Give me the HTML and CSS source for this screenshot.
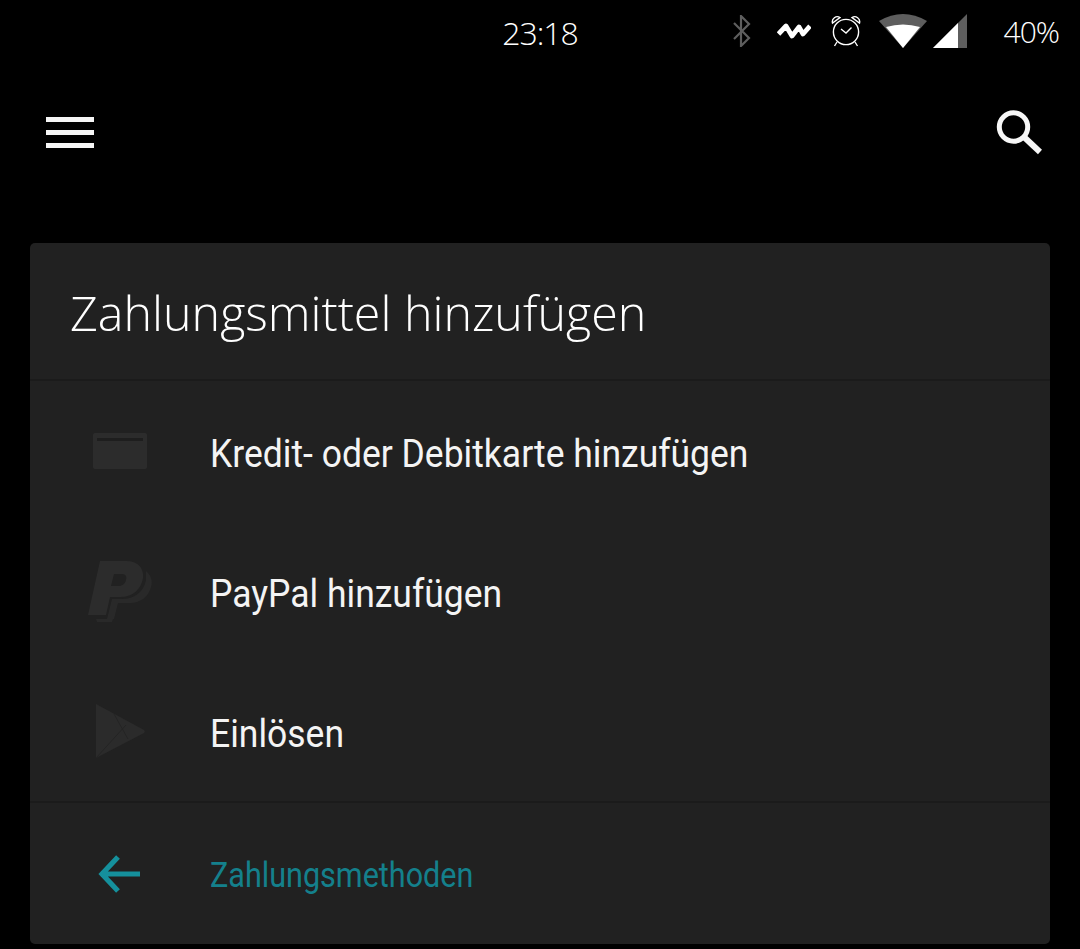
FILE: index.html
```html
<!DOCTYPE html>
<html lang="de">
<head>
<meta charset="utf-8">
<title>Zahlungsmittel hinzufügen</title>
<link rel="stylesheet" href="styles.css">
</head>
<body>
<header class="status">
  <span class="time">23:18</span>
  <div class="status-right">
    <svg class="ic-bt" width="18" height="32" viewBox="0 0 18 32"><path d="M1 8 L16 23 L8 31 V1 L16 9 L1 24" fill="none" stroke="#5e5e5e" stroke-width="2.2"/></svg>
    <svg class="ic-pulse" width="34" height="16" viewBox="0 0 34 16"><path d="M1.5 11 L9 3 L15 13 L22 4 L26 11 L33 3" fill="none" stroke="#fff" stroke-width="4.8" stroke-linejoin="round"/></svg>
    <svg class="ic-alarm" width="30" height="32" viewBox="0 0 30 32"><circle cx="15" cy="17" r="12.6" fill="none" stroke="#fff" stroke-width="1.4"/><path d="M1.5 8 A5 5 0 0 1 9 2.5 Z M28.5 8 A5 5 0 0 0 21 2.5 Z M10 14 L15 18 L20.5 12.5 M6 27 L3.5 31 M24 27 L26.5 31" fill="none" stroke="#fff" stroke-width="1.4"/></svg>
    <svg class="ic-wifi" width="48" height="34" viewBox="0 0 48 34"><path d="M0 7 Q24 -7 48 7 L24 34 Z" fill="#5e5e5e"/><path d="M7 13 Q24 8 41 13 L24 34 Z" fill="#fff"/></svg>
    <svg class="ic-signal" width="34" height="34" viewBox="0 0 34 34"><path d="M0 34 L34 0 V34 Z" fill="#5e5e5e"/><path d="M0 34 L25 9 V34 Z" fill="#fff"/></svg>
    <span class="batt">40%</span>
  </div>
</header>

<nav class="toolbar">
  <div class="menu"><span></span><span></span><span></span></div>
  <svg width="48" height="48" viewBox="0 0 48 48"><circle cx="19.5" cy="19" r="14.2" fill="none" stroke="#f6f6f6" stroke-width="5"/><path d="M30 29 L46 44" stroke="#f6f6f6" stroke-width="6" fill="none"/></svg>
</nav>

<main class="card">
  <h1 class="card-title">Zahlungsmittel hinzufügen</h1>
  <ul class="options">
    <li class="row">
      <svg class="row-icon" width="56" height="38" viewBox="0 0 56 38"><path d="M3 1 H53 A2 2 0 0 1 55 3 V35 A2 2 0 0 1 53 37 H3 A2 2 0 0 1 1 35 V3 A2 2 0 0 1 3 1 Z" fill="#2c2c2c"/><rect x="5" y="6" width="46" height="3" fill="#1e1e1e"/></svg>
      <span class="row-text">Kredit- oder Debitkarte hinzufügen</span>
    </li>
    <li class="row">
      <svg class="row-icon" width="64" height="64" viewBox="0 0 64 64"><path d="M58 12 C63 16 65 22 63 28 C61 37 53 44 42 44 H30 L26 60 H19 L24 40 H34 C46 40 56 33 58 21 Z M8 60 H25 L24 63 H9 Z" fill="#292929"/><path d="M12 2 H38 C50 2 56 9 55 19 C53 31 44 38 32 38 H22 L18 56 H0 Z M26 15 H34 C38 15 39 18 38 21 C37 25 34 27 30 27 H23 Z" fill="#2c2c2c" fill-rule="evenodd"/></svg>
      <span class="row-text">PayPal hinzufügen</span>
    </li>
    <li class="row">
      <svg class="row-icon" width="52" height="56" viewBox="0 0 52 56"><path d="M2 1 L50 27 A2 2 0 0 1 50 30 L2 55 Z" fill="#2b2b2b"/><path d="M2 55 L32 22 M20 11 L34 36" stroke="#242424" stroke-width="1" fill="none"/></svg>
      <span class="row-text">Einlösen</span>
    </li>
  </ul>
  <div class="footer">
    <svg class="row-icon" width="44" height="40" viewBox="0 0 44 40"><path d="M42 20 H5 M20 3 L4 20 L20 37" fill="none" stroke="#15909c" stroke-width="5.2"/></svg>
    <span class="footer-text">Zahlungsmethoden</span>
  </div>
</main>
</body>
</html>
```
FILE: styles.css
```css
* { box-sizing: border-box; }
html, body { margin: 0; height: 100%; }
body {
  background: #000;
  color: #fff;
  width: 1080px;
  height: 949px;
  overflow: hidden;
  font-family: Roboto, "Liberation Sans", sans-serif;
}
.status {
  height: 66px;
  display: flex;
  align-items: center;
  justify-content: center;
  position: relative;
}
.time {
  font: 300 32px "Open Sans", sans-serif;
  letter-spacing: -1px;
  margin-top: -2px;
}
.status-right {
  position: absolute;
  right: 21px;
  top: 13px;
  display: flex;
  align-items: center;
  height: 36px;
}
.ic-bt { margin-right: 26px; }
.ic-pulse { margin-right: 20px; }
.ic-alarm { margin-right: 18px; }
.ic-wifi { margin-right: 6px; }
.ic-signal { margin-right: 37px; }
.batt {
  font: 300 30px "Open Sans", sans-serif;
  letter-spacing: -1px;
}
.toolbar {
  height: 177px;
  padding: 42px 38px 0 46px;
  display: flex;
  justify-content: space-between;
  align-items: flex-start;
}
.menu {
  width: 48px;
  display: flex;
  flex-direction: column;
  gap: 8px;
  margin-top: 9px;
}
.menu span { height: 5px; background: #f6f6f6; }
.card {
  margin: 0 30px;
  height: 701px;
  background: #212121;
  border-radius: 5px;
  display: flex;
  flex-direction: column;
}
.card-title {
  margin: 0;
  height: 138px;
  padding: 1px 40px 0;
  display: flex;
  align-items: center;
  font: 300 48.4px "Open Sans", sans-serif;
  border-bottom: 2px solid #1b1b1b;
}
.options {
  list-style: none;
  margin: 0;
  padding: 0;
  height: 422px;
  border-bottom: 2px solid #1b1b1b;
}
.row, .footer {
  display: flex;
  align-items: center;
  height: 140px;
  position: relative;
}
.row-icon {
  position: absolute;
  left: 90px;
  top: 50%;
  transform: translate(-50%, -50%);
}
.row-text, .footer-text {
  margin-left: 180px;
  padding-top: 6px;
  font-size: 39px;
  color: #f4f4f4;
  transform: scaleX(0.91);
  transform-origin: left center;
  white-space: nowrap;
}
.footer { height: 141px; }
.footer-text { color: #14808c; font-size: 35px; transform: scaleX(0.873); padding-top: 4px; }
```
